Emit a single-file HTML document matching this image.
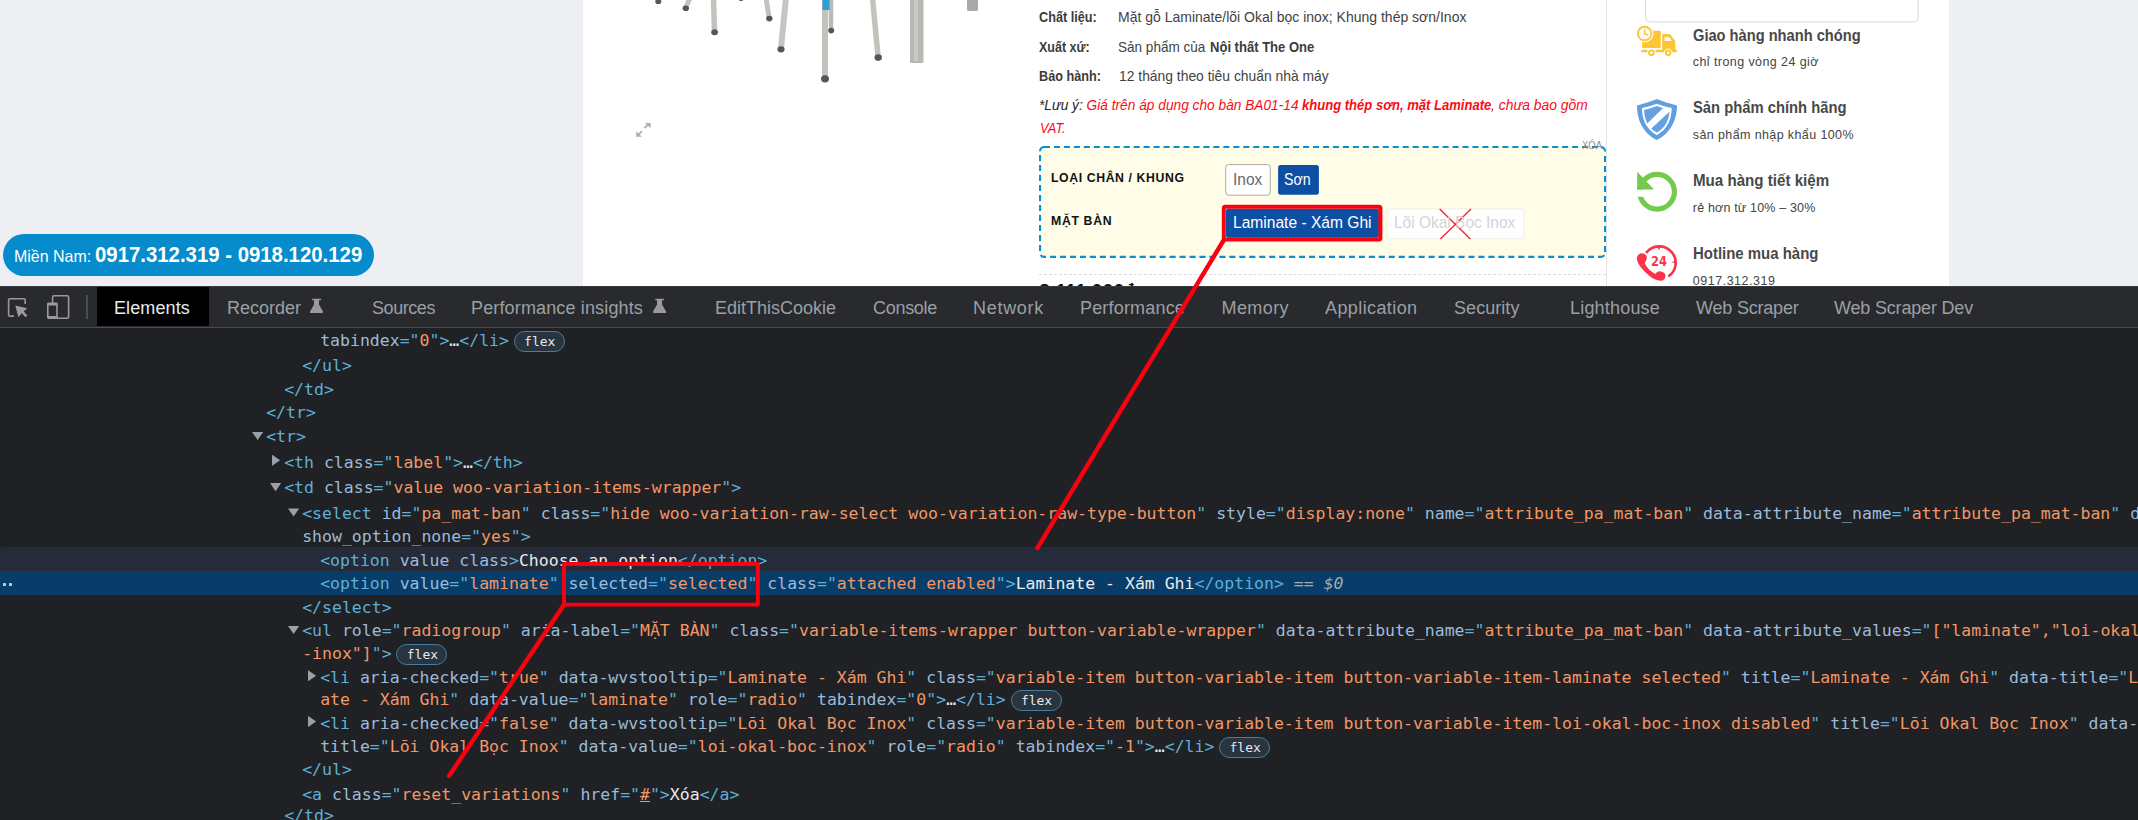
<!DOCTYPE html>
<html lang="vi">
<head>
<meta charset="utf-8">
<title>Bàn ăn BA01-14 - DevTools</title>
<style>
*{box-sizing:border-box;margin:0;padding:0}
html,body{width:2138px;height:820px;overflow:hidden;background:#eeeff3;font-family:"Liberation Sans",sans-serif}
#root{position:absolute;left:0;top:0;width:2138px;height:820px;overflow:hidden}
.abs{position:absolute;white-space:nowrap}
/* ---------- page ---------- */
#page{position:absolute;left:0;top:0;width:2138px;height:286px;background:#eeeff3;overflow:hidden}
#white{position:absolute;left:583px;top:0;width:1366px;height:286px;background:#fff}
#vline{position:absolute;left:1606px;top:0;width:1px;height:286px;background:#e4e4e4}
.t{position:absolute;white-space:nowrap;color:#3a3a3a;font-size:14.5px;line-height:20px}
.lb{font-weight:bold;color:#444}
/* ---------- devtools ---------- */
#dt{position:absolute;left:0;top:286px;width:2138px;height:534px;background:#202124;overflow:hidden}
#tb{position:absolute;left:0;top:0;width:2138px;height:42px;background:#292a2d;border-bottom:1px solid #494c50}
.tab{position:absolute;top:0;height:40px;line-height:42px;font-size:18.5px;color:#9aa0a6;white-space:nowrap;font-family:"Liberation Sans","DejaVu Sans",sans-serif}
.row{position:absolute;left:0;width:2138px;height:24px;line-height:24px;white-space:pre;font-family:"DejaVu Sans Mono","Liberation Mono",monospace;font-size:16.5px;color:#e8eaed}
.g{color:#5db0d7}   /* tag */
.a{color:#9bbbdc}   /* attr name */
.v{color:#f29766}   /* attr value */
.w{color:#e8eaed}
.u{text-decoration:underline}
.eq{color:#a9abae;font-style:italic}
.flex{display:inline-block;vertical-align:top;position:relative;top:1.5px;margin-left:4.8px;width:51px;height:21px;line-height:19px;border:1px solid #47809e;border-radius:11px;background:#283540;color:#e8eaed;font-size:13px;text-align:center;padding-left:1px}
.ar{position:absolute;background:#9aa0a6;display:block}
.ar.d{width:11.2px;height:8.2px;clip-path:polygon(0 0,100% 0,50% 100%)}
.ar.r{width:8.3px;height:11.4px;clip-path:polygon(0 0,100% 50%,0 100%)}
.rbg{position:absolute;left:0;width:2138px;height:24px}
.rbg.hov{background:#252b38}
.dot{position:absolute;display:block;width:3.4px;height:3.4px;border-radius:.6px;background:#c4c6c8}
.rbg.sel{background:#083d6a}
</style>
</head>
<body>
<div id="root">
<div id="page">
  <div id="white"></div>
  <div id="vline"></div>
  <!-- pill -->
<div style="position:absolute;left:3px;top:234px;width:371px;height:42px;border-radius:21px;background:#068ccc"></div>
<!-- sidebar top box (bottom part only) -->

<!-- variations box -->
<div style="position:absolute;left:1039px;top:146px;width:567px;height:112px;border-radius:5px;background:#fffde8"></div>
<svg style="position:absolute;left:1030px;top:140px" width="590" height="125" viewBox="1030 140 590 125">
  <g fill="none" stroke="#0a8fd1" stroke-width="2.100">
    <line x1="1053.900" y1="147" x2="1599" y2="147" stroke-dasharray="6.100 3.865"/>
    <line x1="1050" y1="256.900" x2="1596" y2="256.900" stroke-dasharray="6.100 3.863"/>
    <line x1="1040.050" y1="154.900" x2="1040.050" y2="252" stroke-dasharray="6 4"/>
    <line x1="1605.050" y1="156.100" x2="1605.050" y2="252.500" stroke-dasharray="6 4"/>
    <path d="M1040.050 151.300 V151 A4 4 0 0 1 1044.050 147 H1050"/>
    <path d="M1601 147 A4 4 0 0 1 1605.050 151 V151.600"/>
    <path d="M1040.600 254.900 A4 4 0 0 0 1044.050 256.900 H1046"/>
    <path d="M1598 256.900 H1601 A4 4 0 0 0 1604.300 255.200"/>
  </g>
</svg>
<!-- dashed separator under the box -->
<div style="position:absolute;left:1039px;top:274px;width:567px;height:0;border-top:1px dashed #dcdcdc"></div>
<!-- buttons are drawn in the svg below -->
<svg style="position:absolute;left:0;top:0" width="2138" height="286" viewBox="0 0 2138 286">
  <!-- sidebar top box (only its bottom edge is visible) -->
  <rect x="1645.600" y="-12" width="272.600" height="33.900" rx="4" fill="#fff" stroke="#d9d9d9" stroke-width="1"/>
  <!-- buttons -->
  <rect x="1225.700" y="164.600" width="44.600" height="30.600" rx="3" fill="#fff" stroke="#aaa89b" stroke-width="1"/>
  <rect x="1278.100" y="165.100" width="40.800" height="29.600" rx="2.500" fill="#0d4fa3"/>
  <rect x="1226" y="208.800" width="152.900" height="29" rx="2" fill="#0d4fa3"/>
  <rect x="1387.100" y="208.900" width="136.700" height="29.900" rx="3.200" fill="#fff" stroke="#efeee2" stroke-width="1"/>
  <!-- product image: chair/table legs -->
  <g stroke-linecap="butt" fill="none">
    <line x1="690" y1="-2" x2="686" y2="7" stroke="#c3c3be" stroke-width="5"/>
    <line x1="713.5" y1="-2" x2="714.5" y2="31" stroke="#c3c3be" stroke-width="5.5"/>
    <line x1="766" y1="-2" x2="769" y2="17" stroke="#c3c3be" stroke-width="5"/>
    <line x1="786" y1="-2" x2="781" y2="48" stroke="#c6c6c1" stroke-width="6"/>
    <line x1="831" y1="-2" x2="831" y2="29" stroke="#b9b9b5" stroke-width="4.5"/>
    <line x1="825" y1="-2" x2="825" y2="77" stroke="#c3c3be" stroke-width="6"/>
    <line x1="872.5" y1="-2" x2="878" y2="56" stroke="#c3c3be" stroke-width="5.5"/>
    <line x1="826" y1="-2" x2="826" y2="10" stroke="#2f9fd6" stroke-width="7"/>
  </g>
  <rect x="910" y="-2" width="13.5" height="65" rx="1.5" fill="#b9b9b4"/>
  <rect x="914" y="-2" width="4" height="63" fill="#c9c9c5"/>
  <rect x="967" y="-2" width="11" height="13" rx="1.5" fill="#a9a9a6"/>
  <g fill="#55555a">
    <ellipse cx="658.3" cy="1.5" rx="3" ry="2.6"/>
    <ellipse cx="685.8" cy="8.2" rx="3.2" ry="2.8"/>
    <ellipse cx="714.6" cy="32.3" rx="3.4" ry="3"/>
    <ellipse cx="741" cy="-0.5" rx="2.4" ry="1.6"/>
    <ellipse cx="769.3" cy="18.6" rx="3.2" ry="2.8"/>
    <ellipse cx="781" cy="49.3" rx="3.6" ry="3.1"/>
    <ellipse cx="831.2" cy="30.6" rx="3" ry="2.8"/>
    <ellipse cx="825" cy="78.8" rx="4" ry="3.6"/>
    <ellipse cx="878.2" cy="57.6" rx="3.7" ry="3.3"/>
  </g>
  <!-- expand icon -->
  <g stroke="#adadad" stroke-width="1.800" fill="#adadad" stroke-linecap="butt">
    <line x1="644.300" y1="128.100" x2="648.300" y2="124.300"/>
    <path d="M645 123 h5.700 v5 z" stroke="none"/>
    <line x1="642" y1="131.200" x2="638.200" y2="134.800"/>
    <path d="M636.200 131.300 v5.500 h5.700 z" stroke="none"/>
  </g>
  <!-- red cross on the disabled button -->
  <g stroke="#f0202c" stroke-width="1.3">
    <line x1="1439.700" y1="209" x2="1470.300" y2="239"/>
    <line x1="1471" y1="209" x2="1440.400" y2="239"/>
  </g>
  <!-- ICON 1 : truck -->
  <g fill="#fdc433">
    <rect x="1642.100" y="30.750" width="18.600" height="17.150" rx="1.200"/>
    <path d="M1662.200 35.200 a1.300 1.300 0 0 1 1.300 -1.300 H1668.800 a2 2 0 0 1 1.700 0.900 L1674.900 40.800 a2 2 0 0 1 0.400 1.200 V49.700 H1675.700 a1.250 1.250 0 0 1 0 2.500 H1655.400 V49.700 H1662.200 Z"/>
    <rect x="1641" y="49.700" width="6.900" height="2.500" rx="1.250"/>
  </g>
  <g fill="#fff">
    <circle cx="1644.600" cy="33.570" r="8.800"/>
    <circle cx="1651.400" cy="52.770" r="4.200"/>
    <circle cx="1668.150" cy="52.770" r="4.200"/>
    <path d="M1664.600 37.150 H1669.400 L1672 41 H1664.600 Z"/>
  </g>
  <g fill="none" stroke="#fdc433">
    <circle cx="1644.600" cy="33.570" r="6.750" stroke-width="1.950"/>
    <circle cx="1651.400" cy="52.770" r="2.380" stroke-width="1.900"/>
    <circle cx="1668.150" cy="52.770" r="2.380" stroke-width="1.900"/>
    <path d="M1644.600 29.400 V33.700 L1647.600 34.700" stroke-width="1.500" stroke-linecap="round" stroke-linejoin="round"/>
  </g>
  <!-- ICON 2 : shield -->
  <path d="M1656.800 99 C1651 101.600 1644 103.600 1637 105.400 C1637 118 1641.500 132 1656.800 140.100 C1672.100 132 1677 118 1677 105.400 C1670 103.600 1662.600 101.600 1656.800 99 Z" fill="#5f9fe2"/>
  <path d="M1656.800 103.800 C1652 105.500 1646.800 107 1641.900 108.100 C1642 118.500 1645.500 129 1656.800 135.200 C1668.100 129 1671.600 118.500 1671.700 108.100 C1666.800 107 1661.600 105.500 1656.800 103.800 Z" fill="#fff"/>
  <path d="M1656.800 106 C1652.800 107.500 1648.400 108.900 1644.100 109.900 C1644.300 118.500 1647.300 127.300 1656.800 132.500 C1666.300 127.300 1669.300 118.500 1669.500 109.900 C1665.200 108.900 1660.800 107.500 1656.800 106 Z" fill="#62a1e3"/>
  <path d="M1646.200 124.500 L1664.200 107.100 L1671 110.200 L1650.500 129.300 Z" fill="#fff"/>
  <!-- ICON 3 : refresh -->
  <circle cx="1657.050" cy="191.750" r="17.350" fill="none" stroke="#73ca4d" stroke-width="5.200"/>
  <rect x="1634" y="189.500" width="15" height="7.300" fill="#fff"/>
  <path d="M1637.200 171.800 V189.500 H1654.100 Z" fill="#73ca4d"/>
  <!-- ICON 4 : hotline 24 -->
  <path d="M1646.150 253 A16.400 16.400 0 1 1 1668.300 276.500" fill="none" stroke="#fc3349" stroke-width="2.600"/>
  <path d="M1657.200 246.800 H1660.600 L1659 250.300 Z M1675 260.900 V263.300 L1671.500 262.200 Z" fill="#fc3349"/>
  <path d="M1641.700 253.200 C1644.500 253 1647.200 255.500 1646.800 258.200 C1646.500 260.300 1645.200 261.600 1644.600 263.100 C1646.500 267.500 1650.500 271.500 1655.200 273.900 C1656.500 272.500 1658 271.200 1659.800 271.300 C1662.800 271.500 1665.600 273.400 1665.500 276 C1665.400 278.600 1663.800 280.600 1661.400 280.700 C1657 280.900 1652.500 278.600 1649.300 275.700 C1644 271 1639.300 266.500 1637.600 261.700 C1636.800 259.800 1636.600 258.200 1637.300 256.600 C1638 254.600 1639.600 253.300 1641.700 253.200 Z" fill="#fc3349"/>
  <text x="1651" y="265.750" textLength="16" lengthAdjust="spacingAndGlyphs" font-family="DejaVu Sans, Liberation Sans, sans-serif" font-weight="bold" font-size="13.200" fill="#fc3349">24</text>
</svg>

<span class="abs" style="left:1038.9px;top:5.81px;height:21px;line-height:21px;font-size:15px;font-weight:bold;font-style:normal;color:#3c3c3c;font-family:'Liberation Sans',sans-serif;transform:scaleX(0.8443);transform-origin:0 50%;">Chất liệu:</span>
<span class="abs" style="left:1118.3px;top:5.81px;height:21px;line-height:21px;font-size:15px;font-weight:normal;font-style:normal;color:#424242;font-family:'Liberation Sans',sans-serif;transform:scaleX(0.9331);transform-origin:0 50%;">Mặt gỗ Laminate/lõi Okal bọc inox; Khung thép sơn/Inox</span>
<span class="abs" style="left:1038.9px;top:35.70px;height:21px;line-height:21px;font-size:15px;font-weight:bold;font-style:normal;color:#3c3c3c;font-family:'Liberation Sans',sans-serif;transform:scaleX(0.8329);transform-origin:0 50%;">Xuất xứ:</span>
<span class="abs" style="left:1118.3px;top:35.70px;height:21px;line-height:21px;font-size:15px;font-weight:normal;font-style:normal;color:#424242;font-family:'Liberation Sans',sans-serif;transform:scaleX(0.9025);transform-origin:0 50%;">Sản phẩm của</span>
<span class="abs" style="left:1210.4px;top:35.70px;height:21px;line-height:21px;font-size:15px;font-weight:bold;font-style:normal;color:#3c3c3c;font-family:'Liberation Sans',sans-serif;transform:scaleX(0.8692);transform-origin:0 50%;">Nội thất The One</span>
<span class="abs" style="left:1038.9px;top:65.11px;height:21px;line-height:21px;font-size:15px;font-weight:bold;font-style:normal;color:#3c3c3c;font-family:'Liberation Sans',sans-serif;transform:scaleX(0.8440);transform-origin:0 50%;">Bảo hành:</span>
<span class="abs" style="left:1118.7px;top:65.11px;height:21px;line-height:21px;font-size:15px;font-weight:normal;font-style:normal;color:#424242;font-family:'Liberation Sans',sans-serif;transform:scaleX(0.9244);transform-origin:0 50%;">12 tháng theo tiêu chuẩn nhà máy</span>
<span class="abs" style="left:1039.4px;top:94.11px;height:21px;line-height:21px;font-size:15px;font-weight:normal;font-style:italic;color:#fa0c14;font-family:'Liberation Sans',sans-serif;transform:scaleX(0.9144);transform-origin:0 50%;"><span style="color:#262626">*Lưu ý:</span> Giá trên áp dụng cho bàn BA01-14</span>
<span class="abs" style="left:1302.3px;top:94.11px;height:21px;line-height:21px;font-size:15px;font-weight:bold;font-style:italic;color:#fa0c14;font-family:'Liberation Sans',sans-serif;transform:scaleX(0.8699);transform-origin:0 50%;">khung thép sơn, mặt Laminate</span>
<span class="abs" style="left:1490.6px;top:94.11px;height:21px;line-height:21px;font-size:15px;font-weight:normal;font-style:italic;color:#fa0c14;font-family:'Liberation Sans',sans-serif;transform:scaleX(0.9256);transform-origin:0 50%;">, chưa bao gồm</span>
<span class="abs" style="left:1040px;top:116.92px;height:21px;line-height:21px;font-size:15px;font-weight:normal;font-style:italic;color:#fa0c14;font-family:'Liberation Sans',sans-serif;transform:scaleX(0.8524);transform-origin:0 50%;">VAT.</span>
<span class="abs" style="left:1582.2px;top:138.30px;height:15px;line-height:15px;font-size:11px;font-weight:normal;font-style:normal;color:#8d8d8d;font-family:'Liberation Sans',sans-serif;transform:scaleX(0.8651);transform-origin:0 50%;">XÓA</span>
<span class="abs" style="left:1051.1px;top:168.81px;height:18px;line-height:18px;font-size:13.2px;font-weight:bold;font-style:normal;color:#111;font-family:'Liberation Sans',sans-serif;letter-spacing:0.650px;transform:scaleX(0.9300);transform-origin:0 50%;">LOẠI CHÂN / KHUNG</span>
<span class="abs" style="left:1051.1px;top:211.81px;height:18px;line-height:18px;font-size:13.2px;font-weight:bold;font-style:normal;color:#111;font-family:'Liberation Sans',sans-serif;letter-spacing:0.713px;transform:scaleX(0.9300);transform-origin:0 50%;">MẶT BÀN</span>
<span class="abs" style="left:1232.7px;top:168.00px;height:23px;line-height:23px;font-size:16.4px;font-weight:normal;font-style:normal;color:#666a70;font-family:'Liberation Sans',sans-serif;transform:scaleX(0.9424);transform-origin:0 50%;">Inox</span>
<span class="abs" style="left:1284.4px;top:168.00px;height:23px;line-height:23px;font-size:16.4px;font-weight:normal;font-style:normal;color:#fff;font-family:'Liberation Sans',sans-serif;transform:scaleX(0.8670);transform-origin:0 50%;">Sơn</span>
<span class="abs" style="left:1232.6px;top:211.11px;height:24px;line-height:24px;font-size:16.8px;font-weight:normal;font-style:normal;color:#fff;font-family:'Liberation Sans',sans-serif;transform:scaleX(0.9281);transform-origin:0 50%;">Laminate - Xám Ghi</span>
<span class="abs" style="left:1394.4px;top:211.01px;height:24px;line-height:24px;font-size:16.8px;font-weight:normal;font-style:normal;color:#d4d4d4;font-family:'Liberation Sans',sans-serif;transform:scaleX(0.9222);transform-origin:0 50%;">Lõi Okal Bọc Inox</span>
<span class="abs" style="left:1039.4px;top:276.41px;height:31px;line-height:31px;font-size:22.5px;font-weight:bold;font-style:normal;color:#111;font-family:'Liberation Sans',sans-serif;transform:scaleX(0.8748);transform-origin:0 50%;">2.111.000₫</span>
<span class="abs" style="left:1692.8px;top:24.71px;height:22px;line-height:22px;font-size:15.6px;font-weight:bold;font-style:normal;color:#484848;font-family:'Liberation Sans',sans-serif;transform:scaleX(0.9392);transform-origin:0 50%;">Giao hàng nhanh chóng</span>
<span class="abs" style="left:1692.8px;top:52.80px;height:18px;line-height:18px;font-size:12.5px;font-weight:normal;font-style:normal;color:#444;font-family:'Liberation Sans',sans-serif;letter-spacing:0.418px;">chỉ trong vòng 24 giờ</span>
<span class="abs" style="left:1692.8px;top:96.61px;height:22px;line-height:22px;font-size:15.6px;font-weight:bold;font-style:normal;color:#484848;font-family:'Liberation Sans',sans-serif;transform:scaleX(0.9474);transform-origin:0 50%;">Sản phẩm chính hãng</span>
<span class="abs" style="left:1692.8px;top:125.71px;height:18px;line-height:18px;font-size:12.5px;font-weight:normal;font-style:normal;color:#444;font-family:'Liberation Sans',sans-serif;letter-spacing:0.387px;">sản phẩm nhập khẩu 100%</span>
<span class="abs" style="left:1692.8px;top:169.71px;height:22px;line-height:22px;font-size:15.6px;font-weight:bold;font-style:normal;color:#484848;font-family:'Liberation Sans',sans-serif;transform:scaleX(0.9695);transform-origin:0 50%;">Mua hàng tiết kiệm</span>
<span class="abs" style="left:1692.8px;top:198.91px;height:18px;line-height:18px;font-size:12.5px;font-weight:normal;font-style:normal;color:#444;font-family:'Liberation Sans',sans-serif;letter-spacing:0.173px;">rẻ hơn từ 10% – 30%</span>
<span class="abs" style="left:1692.8px;top:242.86px;height:22px;line-height:22px;font-size:15.6px;font-weight:bold;font-style:normal;color:#484848;font-family:'Liberation Sans',sans-serif;transform:scaleX(0.9585);transform-origin:0 50%;">Hotline mua hàng</span>
<span class="abs" style="left:1692.8px;top:271.80px;height:18px;line-height:18px;font-size:12.5px;font-weight:normal;font-style:normal;color:#444;font-family:'Liberation Sans',sans-serif;letter-spacing:0.511px;">0917.312.319</span>
<span class="abs" style="left:14px;top:245.11px;height:23px;line-height:23px;font-size:16.5px;font-weight:normal;font-style:normal;color:#fff;font-family:'Liberation Sans',sans-serif;transform:scaleX(0.9676);transform-origin:0 50%;">Miền Nam:</span>
<span class="abs" style="left:95.4px;top:239.10px;height:31px;line-height:31px;font-size:22.2px;font-weight:bold;font-style:normal;color:#fff;font-family:'Liberation Sans',sans-serif;transform:scaleX(0.9177);transform-origin:0 50%;">0917.312.319 - 0918.120.129</span>
</div>
<div id="dt">
  <div id="tb">
  <div style="position:absolute;left:0;top:0;width:2138px;height:1px;background:#3a3b3f"></div>
<div style="position:absolute;left:97px;top:1px;width:112px;height:39px;background:#000"></div>
<div style="position:absolute;left:86px;top:9px;width:2px;height:24px;background:#4a4d51"></div>
<svg style="position:absolute;left:0;top:0" width="700" height="41" viewBox="0 286 700 41">
  <!-- inspect icon -->
  <path d="M14 316.1 H10 a1.4 1.4 0 0 1 -1.4 -1.4 V300.2 a1.4 1.4 0 0 1 1.4 -1.4 H23.8 a1.4 1.4 0 0 1 1.4 1.4 V304" fill="none" stroke="#9a9a9a" stroke-width="1.6"/>
  <path d="M15.3 305.4 L27.2 308.3 L23.6 311.4 L27.4 315.4 L25.6 317.2 L21.7 313.2 L18.4 317.3 Z" fill="#9a9a9a"/>
  <!-- device icon -->
  <rect x="52.6" y="295.8" width="16" height="22.4" rx="1.4" fill="none" stroke="#9a9a9a" stroke-width="1.6"/>
  <rect x="47" y="302.4" width="10.8" height="16.6" rx="1.4" fill="#9a9a9a"/>
  <rect x="48.6" y="305.5" width="7.6" height="10.5" fill="#292a2d"/>
  <!-- flasks -->
  <g fill="#9a9a9a">
    <path d="M312.2 298.8 h8.7 v1.4 h-1.9 v4.3 l4.1 7.2 a0.8 0.8 0 0 1 -0.7 1.2 h-11.8 a0.8 0.8 0 0 1 -0.7 -1.2 l4.1 -7.2 v-4.3 h-1.8 z"/>
    <path transform="translate(343.05 0)" d="M312.2 298.8 h8.7 v1.4 h-1.9 v4.3 l4.1 7.2 a0.8 0.8 0 0 1 -0.7 1.2 h-11.8 a0.8 0.8 0 0 1 -0.7 -1.2 l4.1 -7.2 v-4.3 h-1.8 z"/>
  </g>
</svg>

<span class="abs" style="left:114px;top:9.82px;height:25px;line-height:25px;font-size:18px;font-weight:normal;font-style:normal;color:#e8eaed;font-family:'Liberation Sans',sans-serif;letter-spacing:0.119px;">Elements</span>
<span class="abs" style="left:227px;top:9.82px;height:25px;line-height:25px;font-size:18px;font-weight:normal;font-style:normal;color:#9aa0a6;font-family:'Liberation Sans',sans-serif;letter-spacing:-0.004px;">Recorder</span>
<span class="abs" style="left:372px;top:9.82px;height:25px;line-height:25px;font-size:18px;font-weight:normal;font-style:normal;color:#9aa0a6;font-family:'Liberation Sans',sans-serif;letter-spacing:-0.435px;">Sources</span>
<span class="abs" style="left:471px;top:9.82px;height:25px;line-height:25px;font-size:18px;font-weight:normal;font-style:normal;color:#9aa0a6;font-family:'Liberation Sans',sans-serif;letter-spacing:0.146px;">Performance insights</span>
<span class="abs" style="left:715px;top:9.82px;height:25px;line-height:25px;font-size:18px;font-weight:normal;font-style:normal;color:#9aa0a6;font-family:'Liberation Sans',sans-serif;letter-spacing:-0.004px;">EditThisCookie</span>
<span class="abs" style="left:873px;top:9.82px;height:25px;line-height:25px;font-size:18px;font-weight:normal;font-style:normal;color:#9aa0a6;font-family:'Liberation Sans',sans-serif;letter-spacing:-0.292px;">Console</span>
<span class="abs" style="left:973px;top:9.82px;height:25px;line-height:25px;font-size:18px;font-weight:normal;font-style:normal;color:#9aa0a6;font-family:'Liberation Sans',sans-serif;letter-spacing:0.712px;">Network</span>
<span class="abs" style="left:1080px;top:9.82px;height:25px;line-height:25px;font-size:18px;font-weight:normal;font-style:normal;color:#9aa0a6;font-family:'Liberation Sans',sans-serif;letter-spacing:0.178px;">Performance</span>
<span class="abs" style="left:1221.5px;top:9.82px;height:25px;line-height:25px;font-size:18px;font-weight:normal;font-style:normal;color:#9aa0a6;font-family:'Liberation Sans',sans-serif;letter-spacing:0.414px;">Memory</span>
<span class="abs" style="left:1325px;top:9.82px;height:25px;line-height:25px;font-size:18px;font-weight:normal;font-style:normal;color:#9aa0a6;font-family:'Liberation Sans',sans-serif;letter-spacing:0.403px;">Application</span>
<span class="abs" style="left:1454px;top:9.82px;height:25px;line-height:25px;font-size:18px;font-weight:normal;font-style:normal;color:#9aa0a6;font-family:'Liberation Sans',sans-serif;letter-spacing:0.059px;">Security</span>
<span class="abs" style="left:1570px;top:9.82px;height:25px;line-height:25px;font-size:18px;font-weight:normal;font-style:normal;color:#9aa0a6;font-family:'Liberation Sans',sans-serif;letter-spacing:0.192px;">Lighthouse</span>
<span class="abs" style="left:1696px;top:9.82px;height:25px;line-height:25px;font-size:18px;font-weight:normal;font-style:normal;color:#9aa0a6;font-family:'Liberation Sans',sans-serif;letter-spacing:-0.202px;">Web Scraper</span>
<span class="abs" style="left:1834px;top:9.82px;height:25px;line-height:25px;font-size:18px;font-weight:normal;font-style:normal;color:#9aa0a6;font-family:'Liberation Sans',sans-serif;letter-spacing:-0.182px;">Web Scraper Dev</span>
  </div>
  <div class="row" style="top:43.4px;padding-left:320.2px"><span class="a">tabindex</span><span class="g">="</span><span class="v">0</span><span class="g">"&gt;</span><span class="w">…</span><span class="g">&lt;/li&gt;</span><span class="flex">flex</span></div>
<div class="row" style="top:67.8px;padding-left:302.2px"><span class="g">&lt;/ul&gt;</span></div>
<div class="row" style="top:91.6px;padding-left:284.2px"><span class="g">&lt;/td&gt;</span></div>
<div class="row" style="top:115.3px;padding-left:266.2px"><span class="g">&lt;/tr&gt;</span></div>
<i class="ar d" style="left:252px;top:145.9px"></i>
<div class="row" style="top:139.2px;padding-left:266.2px"><span class="g">&lt;tr&gt;</span></div>
<i class="ar r" style="left:271.8px;top:168.5px"></i>
<div class="row" style="top:164.5px;padding-left:284.2px"><span class="g">&lt;th</span> <span class="a">class</span><span class="g">="</span><span class="v">label</span><span class="g">"</span><span class="g">&gt;</span><span class="w">…</span><span class="g">&lt;/th&gt;</span></div>
<i class="ar d" style="left:270px;top:197px"></i>
<div class="row" style="top:190.3px;padding-left:284.2px"><span class="g">&lt;td</span> <span class="a">class</span><span class="g">="</span><span class="v">value woo-variation-items-wrapper</span><span class="g">"</span><span class="g">&gt;</span></div>
<i class="ar d" style="left:288px;top:222.4px"></i>
<div class="row" style="top:215.7px;padding-left:302.2px"><span class="g">&lt;select</span> <span class="a">id</span><span class="g">="</span><span class="v">pa_mat-ban</span><span class="g">"</span> <span class="a">class</span><span class="g">="</span><span class="v">hide woo-variation-raw-select woo-variation-raw-type-button</span><span class="g">"</span> <span class="a">style</span><span class="g">="</span><span class="v">display:none</span><span class="g">"</span> <span class="a">name</span><span class="g">="</span><span class="v">attribute_pa_mat-ban</span><span class="g">"</span> <span class="a">data-attribute_name</span><span class="g">="</span><span class="v">attribute_pa_mat-ban</span><span class="g">"</span> <span class="a">data-</span></div>
<div class="row" style="top:238.8px;padding-left:302.2px"><span class="a">show_option_none</span><span class="g">="</span><span class="v">yes</span><span class="g">"&gt;</span></div>
<div class="rbg hov" style="top:261px;height:24px;border-top-left-radius:3px"></div>
<div class="row" style="top:262.6px;padding-left:320.2px"><span class="g">&lt;option</span> <span class="a">value</span> <span class="a">class</span><span class="g">&gt;</span><span class="w">Choose an option</span><span class="g">&lt;/option&gt;</span></div>
<div class="rbg sel" style="top:285px;height:24px"></div>
<i class="dot" style="left:-3px;top:296.8px"></i>
<i class="dot" style="left:3px;top:296.8px"></i>
<i class="dot" style="left:9px;top:296.8px"></i>
<div class="row" style="top:286.2px;padding-left:320.2px"><span class="g">&lt;option</span> <span class="a">value</span><span class="g">="</span><span class="v">laminate</span><span class="g">"</span> <span class="a">selected</span><span class="g">="</span><span class="v">selected</span><span class="g">"</span> <span class="a">class</span><span class="g">="</span><span class="v">attached enabled</span><span class="g">"</span><span class="g">&gt;</span><span class="w">Laminate - Xám Ghi</span><span class="g">&lt;/option&gt;</span><span class="eq"> == $0</span></div>
<div class="row" style="top:310px;padding-left:302.2px"><span class="g">&lt;/select&gt;</span></div>
<i class="ar d" style="left:288px;top:339.9px"></i>
<div class="row" style="top:333.2px;padding-left:302.2px"><span class="g">&lt;ul</span> <span class="a">role</span><span class="g">="</span><span class="v">radiogroup</span><span class="g">"</span> <span class="a">aria-label</span><span class="g">="</span><span class="v">MẶT BÀN</span><span class="g">"</span> <span class="a">class</span><span class="g">="</span><span class="v">variable-items-wrapper button-variable-wrapper</span><span class="g">"</span> <span class="a">data-attribute_name</span><span class="g">="</span><span class="v">attribute_pa_mat-ban</span><span class="g">"</span> <span class="a">data-attribute_values</span><span class="g">="</span><span class="v">["laminate","loi-okal-boc</span></div>
<div class="row" style="top:356.3px;padding-left:302.2px"><span class="v">-inox"]</span><span class="g">"&gt;</span><span class="flex">flex</span></div>
<i class="ar r" style="left:307.8px;top:384.1px"></i>
<div class="row" style="top:380.1px;padding-left:320.2px"><span class="g">&lt;li</span> <span class="a">aria-checked</span><span class="g">="</span><span class="v">true</span><span class="g">"</span> <span class="a">data-wvstooltip</span><span class="g">="</span><span class="v">Laminate - Xám Ghi</span><span class="g">"</span> <span class="a">class</span><span class="g">="</span><span class="v">variable-item button-variable-item button-variable-item-laminate selected</span><span class="g">"</span> <span class="a">title</span><span class="g">="</span><span class="v">Laminate - Xám Ghi</span><span class="g">"</span> <span class="a">data-title</span><span class="g">="</span><span class="v">Lamin</span></div>
<div class="row" style="top:402.1px;padding-left:320.2px"><span class="v">ate - Xám Ghi</span><span class="g">"</span> <span class="a">data-value</span><span class="g">="</span><span class="v">laminate</span><span class="g">"</span> <span class="a">role</span><span class="g">="</span><span class="v">radio</span><span class="g">"</span> <span class="a">tabindex</span><span class="g">="</span><span class="v">0</span><span class="g">"</span><span class="g">&gt;</span><span class="w">…</span><span class="g">&lt;/li&gt;</span><span class="flex">flex</span></div>
<i class="ar r" style="left:307.8px;top:429.8px"></i>
<div class="row" style="top:425.8px;padding-left:320.2px"><span class="g">&lt;li</span> <span class="a">aria-checked</span><span class="g">="</span><span class="v">false</span><span class="g">"</span> <span class="a">data-wvstooltip</span><span class="g">="</span><span class="v">Lõi Okal Bọc Inox</span><span class="g">"</span> <span class="a">class</span><span class="g">="</span><span class="v">variable-item button-variable-item button-variable-item-loi-okal-boc-inox disabled</span><span class="g">"</span> <span class="a">title</span><span class="g">="</span><span class="v">Lõi Okal Bọc Inox</span><span class="g">"</span> <span class="a">data-</span></div>
<div class="row" style="top:449px;padding-left:320.2px"><span class="a">title</span><span class="g">="</span><span class="v">Lõi Okal Bọc Inox</span><span class="g">"</span> <span class="a">data-value</span><span class="g">="</span><span class="v">loi-okal-boc-inox</span><span class="g">"</span> <span class="a">role</span><span class="g">="</span><span class="v">radio</span><span class="g">"</span> <span class="a">tabindex</span><span class="g">="</span><span class="v">-1</span><span class="g">"</span><span class="g">&gt;</span><span class="w">…</span><span class="g">&lt;/li&gt;</span><span class="flex">flex</span></div>
<div class="row" style="top:472.2px;padding-left:302.2px"><span class="g">&lt;/ul&gt;</span></div>
<div class="row" style="top:496.6px;padding-left:302.2px"><span class="g">&lt;a</span> <span class="a">class</span><span class="g">="</span><span class="v">reset_variations</span><span class="g">"</span> <span class="a">href</span><span class="g">="</span><span class="v u">#</span><span class="g">"&gt;</span><span class="w">Xóa</span><span class="g">&lt;/a&gt;</span></div>
<div class="row" style="top:517.9px;padding-left:284.2px"><span class="g">&lt;/td&gt;</span></div>
</div>
<svg style="position:absolute;left:0;top:0;pointer-events:none" width="2138" height="820" viewBox="0 0 2138 820">
  <g fill="none" stroke="#fb0010" stroke-linejoin="round">
    <line x1="1223.500" y1="240.500" x2="1037.300" y2="548.200" stroke-width="4.400" stroke-linecap="round"/>
    <line x1="564.300" y1="604.300" x2="449.100" y2="775.800" stroke-width="4.400" stroke-linecap="round"/>
    <rect x="1223.800" y="206.800" width="156.600" height="32.700" rx="1.500" stroke-width="4"/>
    <rect x="564.050" y="563.950" width="193.800" height="40.700" rx="1" stroke-width="3.900"/>
  </g>
</svg>

</div>
</body>
</html>
